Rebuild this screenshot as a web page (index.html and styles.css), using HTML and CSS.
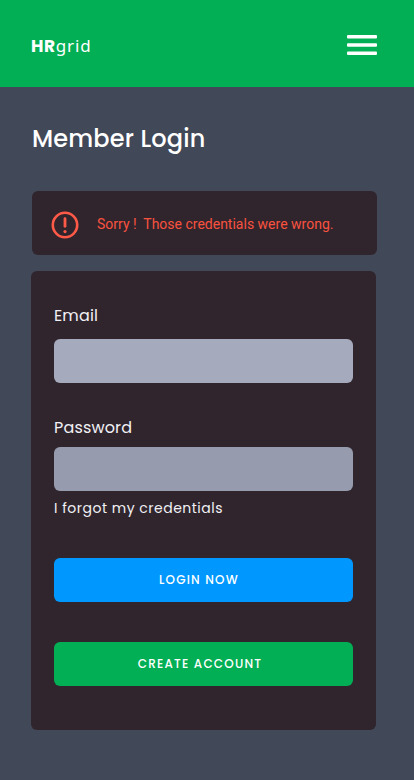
FILE: index.html
```html
<!DOCTYPE html>
<html lang="en">
<head>
<meta charset="utf-8">
<meta name="viewport" content="width=device-width, initial-scale=1">
<title>HRgrid – Member Login</title>
<link rel="stylesheet" href="styles.css">
</head>
<body>
<header class="topbar">
  <a class="logo"><b>HR</b><span>grid</span></a>
  <svg class="menu" width="30" height="20" viewBox="0 0 30 20" role="img" aria-label="Menu">
    <rect y="0" width="30" height="3.4" rx="1"/>
    <rect y="8.3" width="30" height="3.4" rx="1"/>
    <rect y="16.6" width="30" height="3.4" rx="1"/>
  </svg>
</header>
<main>
  <h1>Member Login</h1>
  <div class="alert" role="alert">
    <svg width="28" height="28" viewBox="0 0 28 28" aria-hidden="true">
      <circle cx="14" cy="14" r="12.2" fill="none" stroke="#ff5a47" stroke-width="2.6"/>
      <path d="M14 7.7v7.6" stroke="#ff5a47" stroke-width="2.8" stroke-linecap="round"/>
      <circle cx="14" cy="20.6" r="1.6" fill="#ff5a47"/>
    </svg>
    <span>Sorry !&nbsp; Those credentials were wrong.</span>
  </div>
  <form class="card">
    <label for="email">Email</label>
    <input id="email" class="email" type="email">
    <label for="password" class="password-label">Password</label>
    <input id="password" class="password" type="password">
    <a class="forgot">I forgot my credentials</a>
    <button class="login" type="button">LOGIN NOW</button>
    <button class="create" type="button">CREATE ACCOUNT</button>
  </form>
</main>
</body>
</html>
```
FILE: styles.css
```css
* { box-sizing: border-box; }
body {
  margin: 0;
  min-height: 780px;
  background: #414857;
  color: #fff;
  font-family: Poppins, Inter, "Liberation Sans", sans-serif;
}
.topbar {
  height: 87px;
  padding: 3px 37px 0 31px;
  display: flex;
  align-items: center;
  justify-content: space-between;
  background: #02af55;
}
.logo {
  display: flex;
  align-items: baseline;
  padding-top: 2px;
  font: 17px/24px "Noto Sans", sans-serif;
  letter-spacing: 0.9px;
}
.logo b {
  font: 700 17px/24px Poppins, "Noto Sans", sans-serif;
  letter-spacing: 0.6px;
}
.menu { fill: #fff; }
main { padding: 34px 37px 0 31px; }
h1 {
  margin: 0 0 0 1px;
  font-size: 24px;
  line-height: 36px;
  font-weight: 500;
  letter-spacing: 0.15px;
}
.alert {
  width: 345px;
  height: 64px;
  margin: 34px 0 16px 1px;
  padding: 4px 0 0 19px;
  display: flex;
  align-items: center;
  gap: 18px;
  border-radius: 6px;
  background: #30252d;
  color: #f9523f;
  font: 14px/20px Roboto, sans-serif;
}
.alert span { padding-bottom: 2px; }
.card {
  width: 345px;
  height: 459px;
  padding: 33px 23px 0;
  display: flex;
  flex-direction: column;
  border-radius: 6px;
  background: #30252d;
}
label {
  font-size: 16px;
  line-height: 24px;
  letter-spacing: 0.15px;
  color: #f1f1f5;
}
input, button {
  height: 44px;
  flex: none;
  border: 0;
  border-radius: 6px;
}
.email { margin-top: 11px; background: #a5abbd; }
.password-label { margin-top: 33px; }
.password { margin-top: 7px; background: #969bad; }
.forgot {
  margin-top: 6px;
  font-size: 14px;
  line-height: 22px;
  letter-spacing: 0.5px;
  color: #f1f1f5;
}
button {
  padding: 0 8px 0 0;
  color: #fff;
  font: 500 12px/18px Poppins, Inter, sans-serif;
  letter-spacing: 1.2px;
}
.login { margin-top: 39px; padding-right: 9px; background: #0098ff; }
.create { margin-top: 40px; padding-right: 7px; background: #02af55; }
```
